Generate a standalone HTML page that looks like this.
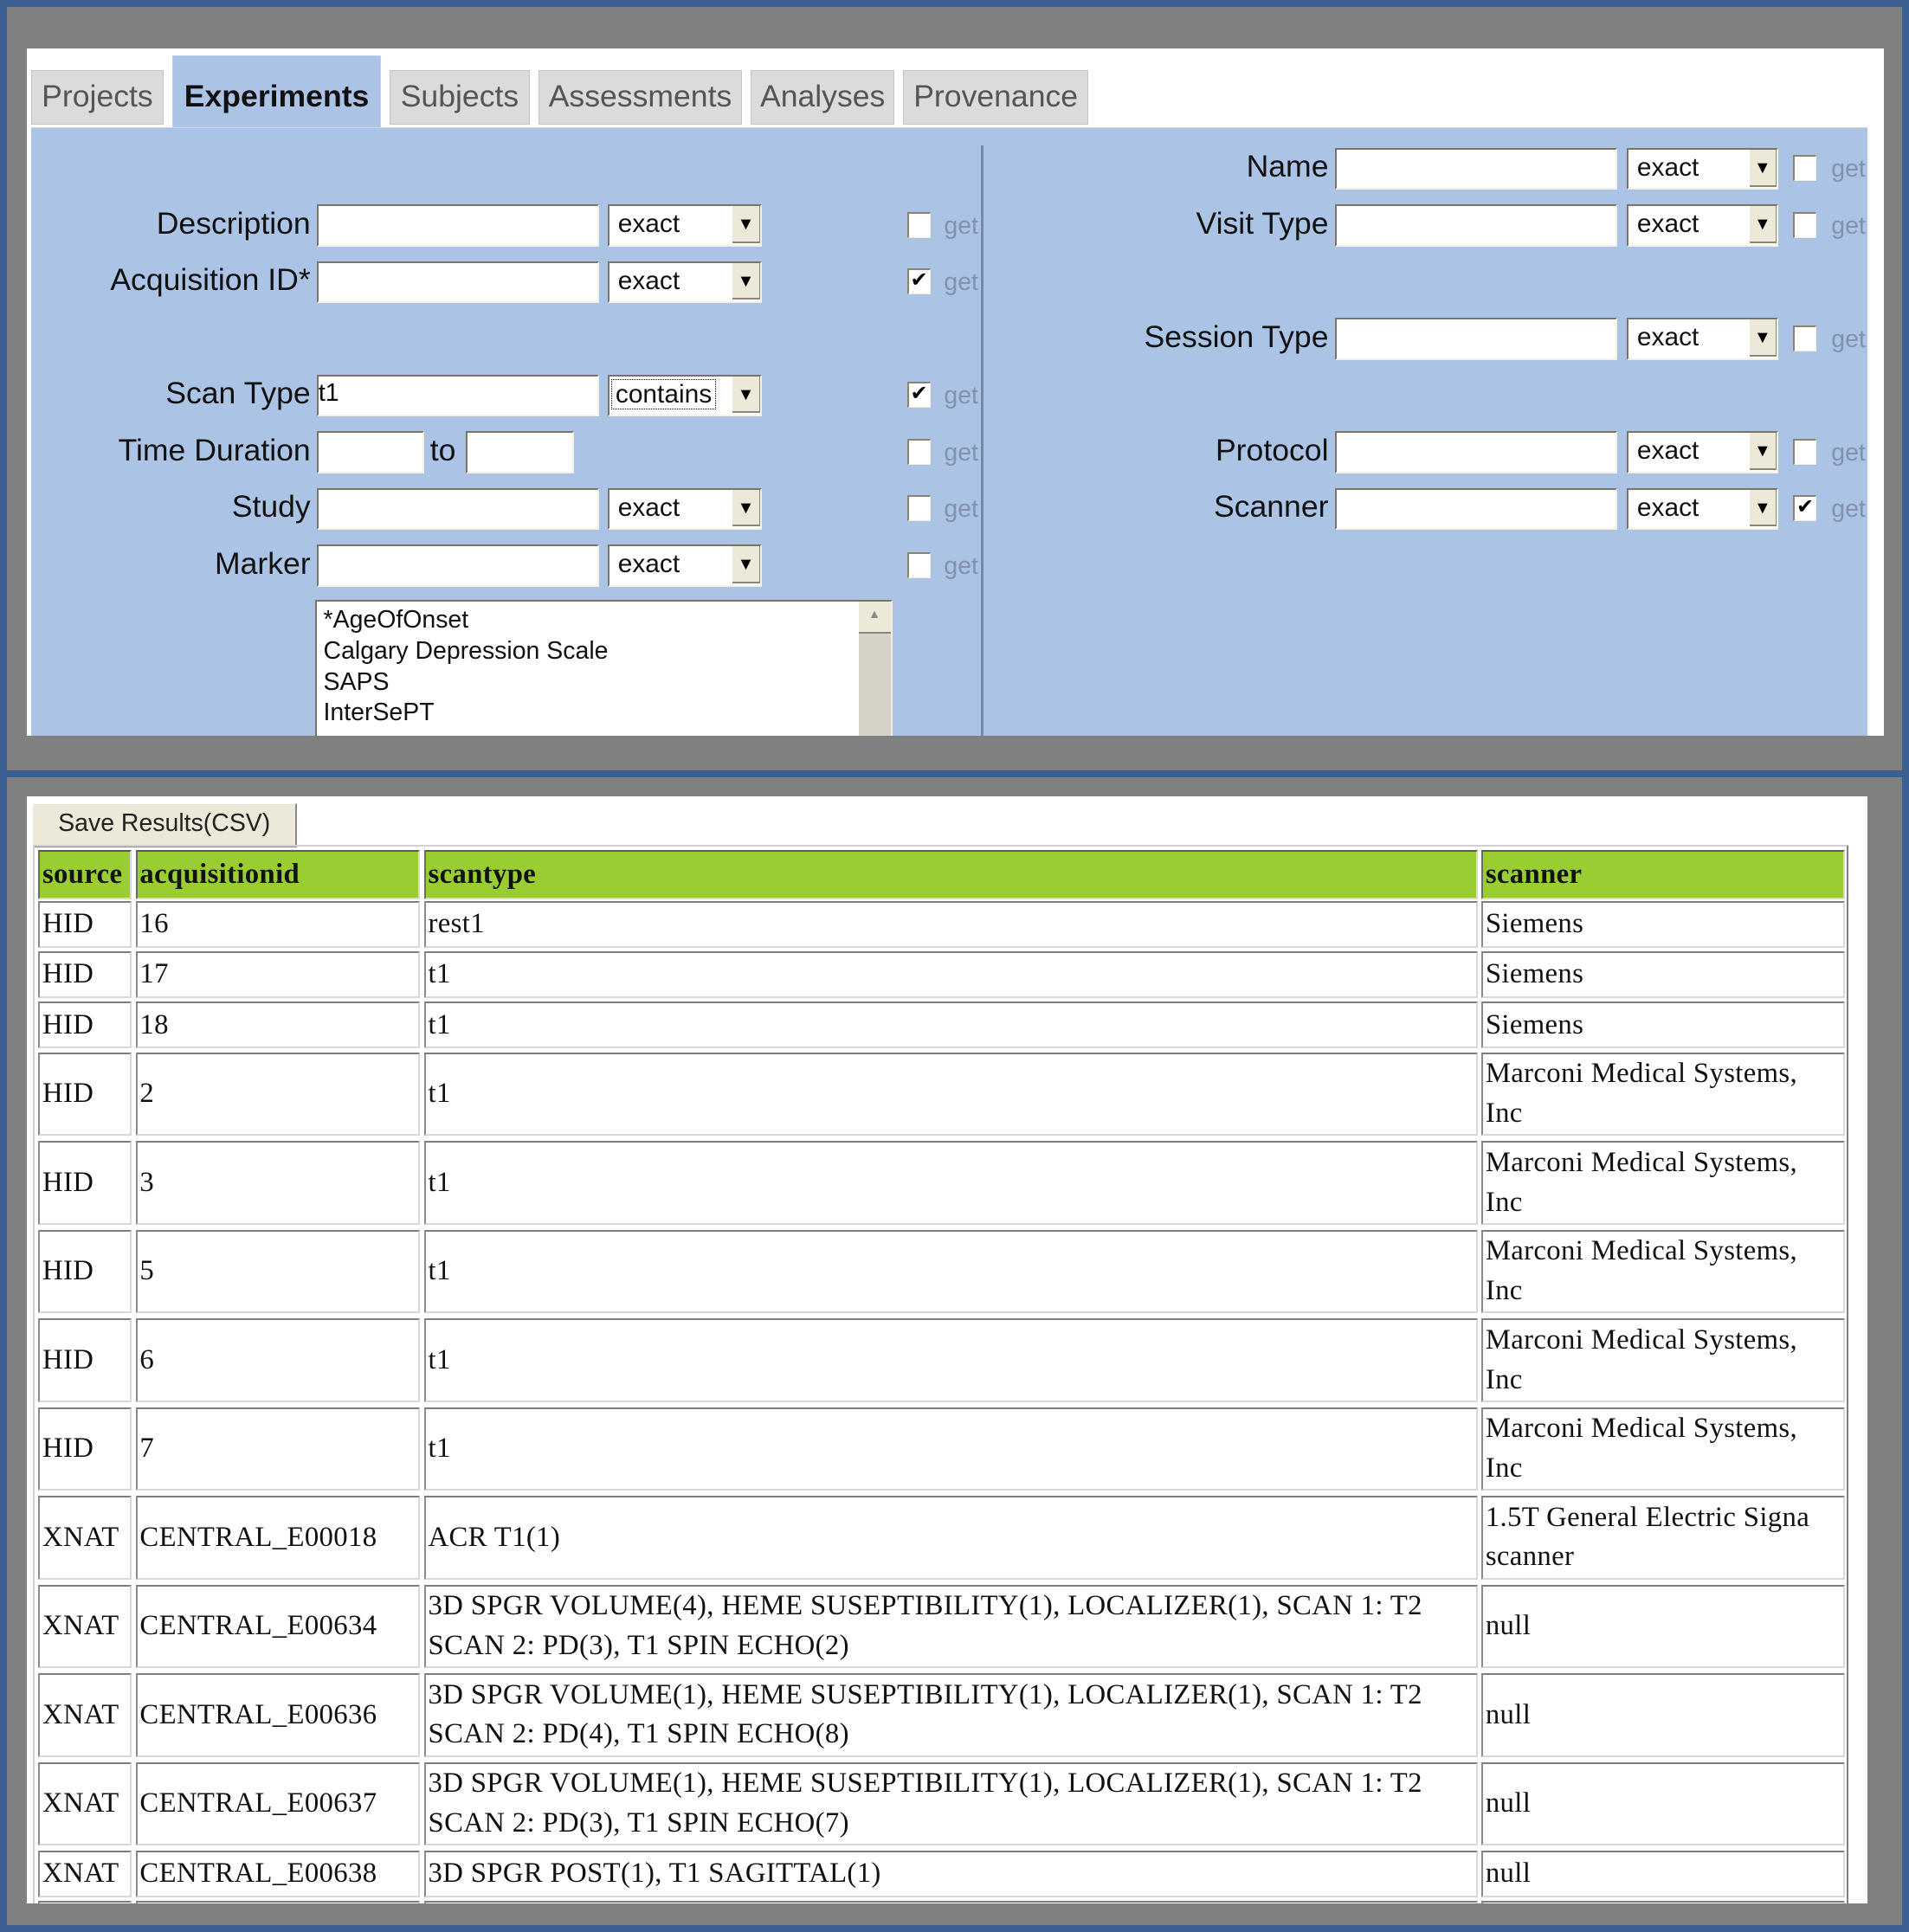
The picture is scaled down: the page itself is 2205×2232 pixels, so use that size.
<!DOCTYPE html>
<html><head><meta charset="utf-8"><style>
html,body{margin:0;padding:0;width:2205px;height:2232px;overflow:hidden;background:#808080}
#w{position:absolute;left:0;top:0;width:1549px;height:1568px;zoom:1.42347;background:#808080;font-family:"Liberation Sans",sans-serif}
.a{position:absolute;box-sizing:border-box}
.frame{border:6px solid #3a5f91;background:#808080}
.tab{background:#dcdadc;border:1px solid #c8c4bc;color:#555;font-size:25px;text-align:center;line-height:42px}
.lbl{font-size:25px;color:#111;text-align:right;white-space:nowrap;letter-spacing:0px}
.inp{background:#fff;border-top:2px solid #7a7462;border-left:2px solid #7a7462;border-bottom:2px solid #f4f1e6;border-right:2px solid #f4f1e6;height:34px}
.sel{background:#fff;border-top:2px solid #7a7462;border-left:2px solid #7a7462;border-bottom:2px solid #f4f1e6;border-right:2px solid #f4f1e6;height:34px;font-size:21px;line-height:30px;padding-left:7px;color:#111}
.sel .btn{position:absolute;right:0;top:0;width:22px;height:30px;background:#ece9d8;border-bottom:2px solid #8a8678;border-right:1px solid #8a8678;font-size:14px;line-height:30px;text-align:center;color:#000;padding:0}
.cb{width:19px;height:21px;background:#fff;border-top:2px solid #8a8370;border-left:2px solid #8a8370;border-bottom:1px solid #f0ede0;border-right:1px solid #f0ede0;font-size:17px;line-height:17px;text-align:center;color:#000}
.get{font-size:20px;color:#8391ad}
.c{position:absolute;box-sizing:border-box;background:#fff;border-top:2px solid #7d7d7d;border-left:2px solid #8a8a8a;border-bottom:2px solid #d8d8d8;border-right:2px solid #d8d8d8;font-family:"Liberation Serif",serif;font-size:23px;color:#111;padding-left:2px;display:flex;align-items:center;line-height:32px;letter-spacing:0.25px}
.h{background:#9acd32;font-weight:bold;border-top:2px solid #5a5a5a;border-left:2px solid #6a6a6a}
</style></head><body><div id="w">
<div class="a frame" style="left:0;top:0;width:1549px;height:631px"></div>
<div class="a frame" style="left:0;top:625px;width:1549px;height:943px"></div>

<div class="a" style="left:22px;top:39px;width:1507px;height:558px;background:#fff"></div>
<div class="a tab" style="left:25px;top:57px;width:108px;height:44px">Projects</div>
<div class="a" style="left:140px;top:45px;width:169px;height:60px;background:#abc3e5;border:1px solid #c0d0e6;font-size:25px;font-weight:bold;text-align:center;line-height:66px;color:#111">Experiments</div>
<div class="a tab" style="left:316px;top:57px;width:114px;height:44px">Subjects</div>
<div class="a tab" style="left:437px;top:57px;width:165px;height:44px">Assessments</div>
<div class="a tab" style="left:609px;top:57px;width:117px;height:44px">Analyses</div>
<div class="a tab" style="left:733px;top:57px;width:150px;height:44px">Provenance</div>
<div class="a" style="left:25px;top:103px;width:1490px;height:494px;background:#abc3e5;border-top:1px solid #d8d6c8"></div>
<div class="a" style="left:796px;top:118px;width:2px;height:479px;background:#7189ad"></div>

<div class="a lbl" style="left:40px;top:167px;width:212px">Description</div>
<div class="a inp" style="left:257px;top:166px;width:229px"></div>
<div class="a sel" style="left:493px;top:166px;width:125px">exact<div class="a btn">▼</div></div>
<div class="a cb" style="left:736px;top:172px"></div><div class="a get" style="left:766px;top:172px">get</div>

<div class="a lbl" style="left:40px;top:213px;width:212px">Acquisition ID*</div>
<div class="a inp" style="left:257px;top:212px;width:229px"></div>
<div class="a sel" style="left:493px;top:212px;width:125px">exact<div class="a btn">▼</div></div>
<div class="a cb" style="left:736px;top:218px">✔</div><div class="a get" style="left:766px;top:218px">get</div>

<div class="a lbl" style="left:40px;top:305px;width:212px">Scan Type</div>
<div class="a inp" style="left:257px;top:304px;width:229px;font-size:20px;line-height:28px">t1</div>
<div class="a sel" style="left:493px;top:304px;width:125px;padding-left:2px"><span style="outline:1px dotted #000;padding:0 3px">contains</span><div class="a btn">▼</div></div>
<div class="a cb" style="left:736px;top:310px">✔</div><div class="a get" style="left:766px;top:310px">get</div>

<div class="a lbl" style="left:40px;top:351px;width:212px">Time Duration</div>
<div class="a inp" style="left:257px;top:350px;width:87px"></div>
<div class="a lbl" style="left:349px;top:351px">to</div>
<div class="a inp" style="left:378px;top:350px;width:88px"></div>
<div class="a cb" style="left:736px;top:356px"></div><div class="a get" style="left:766px;top:356px">get</div>

<div class="a lbl" style="left:40px;top:397px;width:212px">Study</div>
<div class="a inp" style="left:257px;top:396px;width:229px"></div>
<div class="a sel" style="left:493px;top:396px;width:125px">exact<div class="a btn">▼</div></div>
<div class="a cb" style="left:736px;top:402px"></div><div class="a get" style="left:766px;top:402px">get</div>

<div class="a lbl" style="left:40px;top:443px;width:212px">Marker</div>
<div class="a inp" style="left:257px;top:442px;width:229px"></div>
<div class="a sel" style="left:493px;top:442px;width:125px">exact<div class="a btn">▼</div></div>
<div class="a cb" style="left:736px;top:448px"></div><div class="a get" style="left:766px;top:448px">get</div>

<div class="a" style="left:256px;top:487px;width:468px;height:110px;background:#fff;border-top:2px solid #7a7462;border-left:2px solid #7a7462;border-right:2px solid #f0ede0;font-size:20px;line-height:25px;padding:3px 0 0 5px;color:#111;overflow:hidden">*AgeOfOnset<br>Calgary Depression Scale<br>SAPS<br>InterSePT
<div class="a" style="right:0;top:0;width:26px;height:110px;background:#d6d2c8"></div>
<div class="a" style="right:0;top:0;width:26px;height:26px;background:#ece9d8;border-bottom:2px solid #8a8678;font-size:10px;text-align:center;line-height:22px;color:#888">▲</div></div>

<div class="a lbl" style="left:880px;top:121px;width:198px">Name</div>
<div class="a inp" style="left:1083px;top:120px;width:229px"></div>
<div class="a sel" style="left:1320px;top:120px;width:123px">exact<div class="a btn">▼</div></div>
<div class="a cb" style="left:1455px;top:126px"></div><div class="a get" style="left:1486px;top:126px">get</div>

<div class="a lbl" style="left:880px;top:167px;width:198px">Visit Type</div>
<div class="a inp" style="left:1083px;top:166px;width:229px"></div>
<div class="a sel" style="left:1320px;top:166px;width:123px">exact<div class="a btn">▼</div></div>
<div class="a cb" style="left:1455px;top:172px"></div><div class="a get" style="left:1486px;top:172px">get</div>

<div class="a lbl" style="left:880px;top:259px;width:198px">Session Type</div>
<div class="a inp" style="left:1083px;top:258px;width:229px"></div>
<div class="a sel" style="left:1320px;top:258px;width:123px">exact<div class="a btn">▼</div></div>
<div class="a cb" style="left:1455px;top:264px"></div><div class="a get" style="left:1486px;top:264px">get</div>

<div class="a lbl" style="left:880px;top:351px;width:198px">Protocol</div>
<div class="a inp" style="left:1083px;top:350px;width:229px"></div>
<div class="a sel" style="left:1320px;top:350px;width:123px">exact<div class="a btn">▼</div></div>
<div class="a cb" style="left:1455px;top:356px"></div><div class="a get" style="left:1486px;top:356px">get</div>

<div class="a lbl" style="left:880px;top:397px;width:198px">Scanner</div>
<div class="a inp" style="left:1083px;top:396px;width:229px"></div>
<div class="a sel" style="left:1320px;top:396px;width:123px">exact<div class="a btn">▼</div></div>
<div class="a cb" style="left:1455px;top:402px">✔</div><div class="a get" style="left:1486px;top:402px">get</div>

<div class="a" style="left:22px;top:646px;width:1493px;height:899px;background:#fff;overflow:hidden">
<div class="a" style="left:5px;top:6px;width:214px;height:36px;background:#ece9d8;border-right:2px solid #888;border-bottom:2px solid #888;border-top:1px solid #fff;font-size:20px;line-height:32px;text-align:center;color:#222">Save Results(CSV)</div>
<div class="a" style="left:5px;top:40px;width:1473px;height:870px;border-top:2px solid #d0d0d0;border-left:2px solid #d0d0d0;border-right:2px solid #808080"></div>
</div>
<div class="a" style="left:0;top:0;width:1549px;height:1545px;overflow:hidden">
<div class="c h" style="left:31px;top:690px;width:76px;height:40px">source</div>
<div class="c h" style="left:110px;top:690px;width:231px;height:40px">acquisitionid</div>
<div class="c h" style="left:344px;top:690px;width:855px;height:40px">scantype</div>
<div class="c h" style="left:1202px;top:690px;width:295px;height:40px">scanner</div>

<div class="c" style="left:31px;top:731px;width:76px;height:38px">HID</div><div class="c" style="left:110px;top:731px;width:231px;height:38px">16</div><div class="c" style="left:344px;top:731px;width:855px;height:38px">rest1</div><div class="c" style="left:1202px;top:731px;width:295px;height:38px">Siemens</div>
<div class="c" style="left:31px;top:772px;width:76px;height:38px">HID</div><div class="c" style="left:110px;top:772px;width:231px;height:38px">17</div><div class="c" style="left:344px;top:772px;width:855px;height:38px">t1</div><div class="c" style="left:1202px;top:772px;width:295px;height:38px">Siemens</div>
<div class="c" style="left:31px;top:813px;width:76px;height:38px">HID</div><div class="c" style="left:110px;top:813px;width:231px;height:38px">18</div><div class="c" style="left:344px;top:813px;width:855px;height:38px">t1</div><div class="c" style="left:1202px;top:813px;width:295px;height:38px">Siemens</div>

<div class="c" style="left:31px;top:854px;width:76px;height:68px">HID</div><div class="c" style="left:110px;top:854px;width:231px;height:68px">2</div><div class="c" style="left:344px;top:854px;width:855px;height:68px">t1</div><div class="c" style="left:1202px;top:854px;width:295px;height:68px">Marconi Medical Systems,<br>Inc</div>
<div class="c" style="left:31px;top:926px;width:76px;height:68px">HID</div><div class="c" style="left:110px;top:926px;width:231px;height:68px">3</div><div class="c" style="left:344px;top:926px;width:855px;height:68px">t1</div><div class="c" style="left:1202px;top:926px;width:295px;height:68px">Marconi Medical Systems,<br>Inc</div>
<div class="c" style="left:31px;top:998px;width:76px;height:68px">HID</div><div class="c" style="left:110px;top:998px;width:231px;height:68px">5</div><div class="c" style="left:344px;top:998px;width:855px;height:68px">t1</div><div class="c" style="left:1202px;top:998px;width:295px;height:68px">Marconi Medical Systems,<br>Inc</div>
<div class="c" style="left:31px;top:1070px;width:76px;height:68px">HID</div><div class="c" style="left:110px;top:1070px;width:231px;height:68px">6</div><div class="c" style="left:344px;top:1070px;width:855px;height:68px">t1</div><div class="c" style="left:1202px;top:1070px;width:295px;height:68px">Marconi Medical Systems,<br>Inc</div>
<div class="c" style="left:31px;top:1142px;width:76px;height:68px">HID</div><div class="c" style="left:110px;top:1142px;width:231px;height:68px">7</div><div class="c" style="left:344px;top:1142px;width:855px;height:68px">t1</div><div class="c" style="left:1202px;top:1142px;width:295px;height:68px">Marconi Medical Systems,<br>Inc</div>
<div class="c" style="left:31px;top:1214px;width:76px;height:68px">XNAT</div><div class="c" style="left:110px;top:1214px;width:231px;height:68px">CENTRAL_E00018</div><div class="c" style="left:344px;top:1214px;width:855px;height:68px">ACR T1(1)</div><div class="c" style="left:1202px;top:1214px;width:295px;height:68px">1.5T General Electric Signa<br>scanner</div>
<div class="c" style="left:31px;top:1286px;width:76px;height:68px">XNAT</div><div class="c" style="left:110px;top:1286px;width:231px;height:68px">CENTRAL_E00634</div><div class="c" style="left:344px;top:1286px;width:855px;height:68px">3D SPGR VOLUME(4), HEME SUSEPTIBILITY(1), LOCALIZER(1), SCAN 1: T2<br>SCAN 2: PD(3), T1 SPIN ECHO(2)</div><div class="c" style="left:1202px;top:1286px;width:295px;height:68px">null</div>
<div class="c" style="left:31px;top:1358px;width:76px;height:68px">XNAT</div><div class="c" style="left:110px;top:1358px;width:231px;height:68px">CENTRAL_E00636</div><div class="c" style="left:344px;top:1358px;width:855px;height:68px">3D SPGR VOLUME(1), HEME SUSEPTIBILITY(1), LOCALIZER(1), SCAN 1: T2<br>SCAN 2: PD(4), T1 SPIN ECHO(8)</div><div class="c" style="left:1202px;top:1358px;width:295px;height:68px">null</div>
<div class="c" style="left:31px;top:1430px;width:76px;height:68px">XNAT</div><div class="c" style="left:110px;top:1430px;width:231px;height:68px">CENTRAL_E00637</div><div class="c" style="left:344px;top:1430px;width:855px;height:68px">3D SPGR VOLUME(1), HEME SUSEPTIBILITY(1), LOCALIZER(1), SCAN 1: T2<br>SCAN 2: PD(3), T1 SPIN ECHO(7)</div><div class="c" style="left:1202px;top:1430px;width:295px;height:68px">null</div>
<div class="c" style="left:31px;top:1502px;width:76px;height:38px">XNAT</div><div class="c" style="left:110px;top:1502px;width:231px;height:38px">CENTRAL_E00638</div><div class="c" style="left:344px;top:1502px;width:855px;height:38px">3D SPGR POST(1), T1 SAGITTAL(1)</div><div class="c" style="left:1202px;top:1502px;width:295px;height:38px">null</div>
<div class="c" style="left:31px;top:1543px;width:76px;height:38px"></div><div class="c" style="left:110px;top:1543px;width:231px;height:38px"></div><div class="c" style="left:344px;top:1543px;width:855px;height:38px"></div><div class="c" style="left:1202px;top:1543px;width:295px;height:38px"></div>
</div>
</div></body></html>
